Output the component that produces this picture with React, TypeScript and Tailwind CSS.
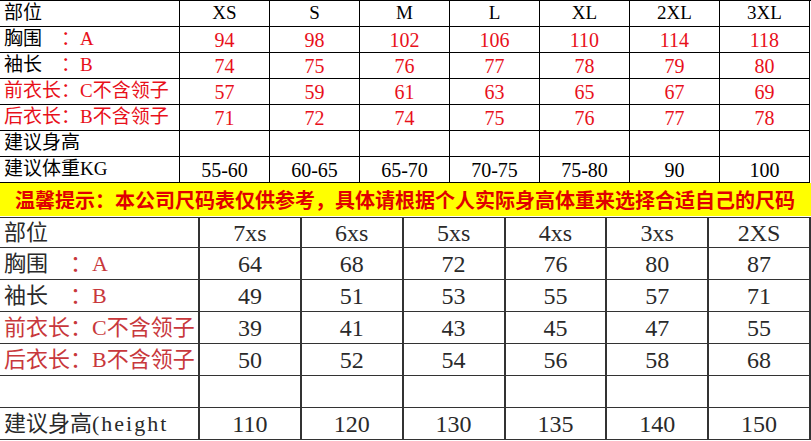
import React from 'react';

const topHead = ['XS', 'S', 'M', 'L', 'XL', '2XL', '3XL'];

const topRows: { label: React.ReactNode; values: (string | number)[]; red: boolean }[] = [
  {
    label: (
      <>
        胸围<span className="text-[#e8101a]">　：A</span>
      </>
    ),
    values: [94, 98, 102, 106, 110, 114, 118],
    red: true,
  },
  {
    label: (
      <>
        袖长<span className="text-[#e8101a]">　：B</span>
      </>
    ),
    values: [74, 75, 76, 77, 78, 79, 80],
    red: true,
  },
  {
    label: <span className="text-[#e8101a]">前衣长：C不含领子</span>,
    values: [57, 59, 61, 63, 65, 67, 69],
    red: true,
  },
  {
    label: <span className="text-[#e8101a]">后衣长：B不含领子</span>,
    values: [71, 72, 74, 75, 76, 77, 78],
    red: true,
  },
  { label: '建议身高', values: ['', '', '', '', '', '', ''], red: false },
  {
    label: '建议体重KG',
    values: ['55-60', '60-65', '65-70', '70-75', '75-80', '90', '100'],
    red: false,
  },
];

const bottomHead = ['7xs', '6xs', '5xs', '4xs', '3xs', '2XS'];

const bottomRows: { label: React.ReactNode; values: (string | number)[] }[] = [
  {
    label: (
      <>
        胸围<span className="text-[#c8383c]">　：A</span>
      </>
    ),
    values: [64, 68, 72, 76, 80, 87],
  },
  {
    label: (
      <>
        袖长<span className="text-[#c8383c]">　：B</span>
      </>
    ),
    values: [49, 51, 53, 55, 57, 71],
  },
  {
    label: <span className="text-[#c8383c]">前衣长：C不含领子</span>,
    values: [39, 41, 43, 45, 47, 55],
  },
  {
    label: <span className="text-[#c8383c]">后衣长：B不含领子</span>,
    values: [50, 52, 54, 56, 58, 68],
  },
  { label: '', values: ['', '', '', '', '', ''] },
  {
    label: (
      <>
        建议身高<span className="tracking-[2px]">(height</span>
      </>
    ),
    values: [110, 120, 130, 135, 140, 150],
  },
];

const font = { fontFamily: '"Liberation Serif", "Noto Sans CJK SC", serif' };

export default function App() {
  return (
    <div className="w-[811px] h-[441px] overflow-hidden bg-white" style={font}>
      {/* Top size chart */}
      <div className="grid grid-cols-[180px_repeat(7,90px)] border-t border-black">
        <div className="h-[26px] flex items-center pl-1 text-[19px] text-black border-r border-b border-black">
          部位
        </div>
        {topHead.map((h) => (
          <div
            key={h}
            className="h-[26px] flex items-center justify-center text-[19px] text-black border-r border-b border-black"
          >
            {h}
          </div>
        ))}
        {topRows.map((row, i) => (
          <React.Fragment key={i}>
            <div className="h-[26px] flex items-center pl-1 text-[19px] text-black whitespace-nowrap border-r border-b border-black">
              {row.label}
            </div>
            {row.values.map((v, j) => (
              <div
                key={j}
                className={`h-[26px] flex items-center justify-center text-[20px] border-r border-b border-black ${
                  row.red ? 'text-[#e8101a]' : 'text-black'
                }`}
              >
                {v}
              </div>
            ))}
          </React.Fragment>
        ))}
      </div>

      {/* Notice */}
      <div
        className="h-[33px] bg-[#ffff00] flex items-center pl-[15px] text-[20px] font-bold text-[#e00000] whitespace-nowrap"
        style={{ fontFamily: '"Noto Sans CJK SC", sans-serif' }}
      >
        温馨提示：本公司尺码表仅供参考，具体请根据个人实际身高体重来选择合适自己的尺码
      </div>

      {/* Kids size chart */}
      <div className="mt-[1px] grid grid-cols-[200px_repeat(6,1fr)] border-t border-[#333] text-[#2a2a2a]">
        <div className="h-[30px] flex items-center pl-1 text-[22px] border-r-2 border-b border-[#333]">
          部位
        </div>
        {bottomHead.map((h) => (
          <div
            key={h}
            className="h-[30px] flex items-center justify-center text-[24px] border-r-2 border-b border-[#333]"
          >
            {h}
          </div>
        ))}
        {bottomRows.map((row, i) => (
          <React.Fragment key={i}>
            <div className="h-[32px] flex items-center pl-1 text-[22px] whitespace-nowrap overflow-hidden border-r-2 border-b border-[#333]">
              {row.label}
            </div>
            {row.values.map((v, j) => (
              <div
                key={j}
                className="h-[32px] flex items-center justify-center text-[24px] border-r-2 border-b border-[#333]"
              >
                {v}
              </div>
            ))}
          </React.Fragment>
        ))}
      </div>
    </div>
  );
}
